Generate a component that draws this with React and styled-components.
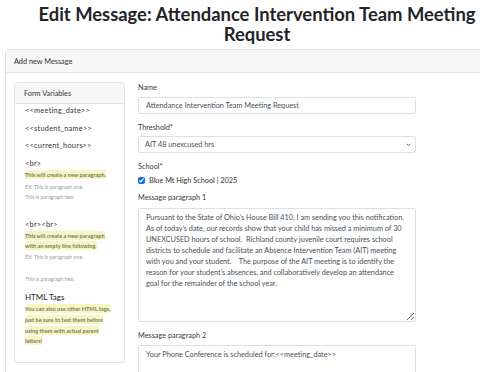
import React from "react";
import styled, { createGlobalStyle } from "styled-components";

const GlobalStyle = createGlobalStyle`
  html, body { margin: 0; padding: 0; overflow: hidden; background: #fff; }
  body { font-family: Lato, "Open Sans", sans-serif; color: #212529; }
  * { box-sizing: border-box; }
`;

const Page = styled.div`
  width: 504px;
  margin-left: 5px;
`;

const Title = styled.h1`
  margin: 5px 0 5px;
  text-align: center;
  font-size: 18.4px;
  line-height: 19.5px;
  font-weight: 700;
  color: #212529;
`;

const Card = styled.div`
  border: 1px solid #dfdfdf;
  border-radius: 3px;
  background: #fff;
`;

const CardHeader = styled.div`
  background: #f7f7f7;
  border-bottom: 1px solid #e3e3e3;
  height: ${(p) => p.$h || 23}px;
  display: flex;
  align-items: center;
  padding-left: ${(p) => p.$pad || 8}px;
  font-size: 7.3px;
  color: #333;
`;

const CardBody = styled.div`
  display: flex;
  align-items: flex-start;
  gap: 13px;
  padding: 9px 8px 10px;
`;

const Sidebar = styled.div`
  width: 111px;
  flex: none;
  border: 1px solid #e3e3e3;
  border-radius: 3px;
`;

const SideBody = styled.div`
  display: flex;
  flex-direction: column;
  align-items: flex-start;
  padding: 1px 8px 15px 10px;
`;

const Var = styled.div`
  font-size: 7.3px;
  line-height: 11px;
  color: #333;
  margin-top: ${(p) => p.$mt || 0}px;
  letter-spacing: 0.3px;
`;

const Heading = styled.div`
  font-size: 8px;
  line-height: 12px;
  font-weight: 400;
  color: #222;
  margin-top: ${(p) => p.$mt || 0}px;
`;

const Note = styled.div`
  font-size: 5.6px;
  line-height: 10.7px;
  font-weight: 700;
  color: #7d7d62;
  margin-top: ${(p) => p.$mt || 0}px;
  mark {
    background: #f8f5c4;
    color: inherit;
    padding: 1px 0;
  }
`;

const Example = styled.div`
  font-size: 5.2px;
  line-height: 9.5px;
  color: #9a9a9a;
  margin-top: ${(p) => p.$mt || 0}px;
`;

const FormCol = styled.div`
  width: 278px;
  flex: none;
  display: flex;
  flex-direction: column;
`;

const Group = styled.div`
  display: flex;
  flex-direction: column;
  margin-bottom: ${(p) => p.$mb ?? 8}px;
`;

const Label = styled.label`
  font-size: 7.3px;
  line-height: 11px;
  color: #3a3a3a;
  margin-bottom: ${(p) => p.$mb ?? 3.5}px;
`;

const fieldBase = `
  display: block;
  width: 278px;
  margin: 0;
  border: 1px solid #dcdfe3;
  border-radius: 2px;
  background: #fff;
  font-family: Lato, "Open Sans", sans-serif;
  font-size: 7.3px;
  color: #495057;
  outline: none;
`;

const Input = styled.input`
  ${fieldBase}
  height: 17px;
  padding: 0 7px;
`;

const SelectWrap = styled.div`
  position: relative;
  width: 278px;
  height: 17px;
`;

const Select = styled.select`
  ${fieldBase}
  height: 17px;
  padding: 0 6px;
  appearance: none;
`;

const Chevron = styled.svg`
  position: absolute;
  right: 5px;
  top: 6px;
  width: 5px;
  height: 5px;
  pointer-events: none;
`;

const CheckRow = styled.label`
  display: flex;
  align-items: center;
  gap: 4px;
  font-size: 7.3px;
  line-height: 11px;
  color: #333;
  margin-top: 2.5px;
`;

const Check = styled.input`
  width: 7px;
  height: 7px;
  margin: 0;
  accent-color: #0b6ee6;
`;

const TextArea = styled.textarea`
  ${fieldBase}
  height: ${(p) => p.$h}px;
  padding: 3px 7px;
  line-height: 11px;
  resize: vertical;
`;

const p1 =
  "Pursuant to the State of Ohio\u2019s House Bill 410, I am sending you this notification. As of today\u2019s date, our records show that your child has missed a minimum of 30 UNEXCUSED hours of school.  Richland county juvenile court requires school districts to schedule and facilitate an Absence Intervention Team (AIT) meeting with you and your student.    The purpose of the AIT meeting is to identify the reason for your student\u2019s absences, and collaboratively develop an attendance goal for the remainder of the school year.";

const p2 =
  "Your Phone Conference is scheduled for:<<meeting_date>>\n\nAll of the staff at the school look forward to speaking with you and your student.";

export default function App() {
  return (
    <>
      <GlobalStyle />
      <Page>
        <Title>
          Edit Message: Attendance Intervention Team Meeting Request
        </Title>
        <Card>
          <CardHeader $h={23}>Add new Message</CardHeader>
          <CardBody>
            <Sidebar>
              <CardHeader $h={21} $pad={9}>Form Variables</CardHeader>
              <SideBody>
                <Var>{"<<meeting_date>>"}</Var>
                <Var $mt={6.6}>{"<<student_name>>"}</Var>
                <Var $mt={6.6}>{"<<current_hours>>"}</Var>
                <Var $mt={7}>{"<br>"}</Var>
                <Note $mt={1}>
                  <mark>This will create a new paragraph.</mark>
                </Note>
                <Example $mt={2.2}>EX: This is paragraph one.</Example>
                <Example>This is paragraph two.</Example>
                <Var $mt={17}>{"<br><br>"}</Var>
                <Note $mt={0.5}>
                  <mark>This will create a new paragraph</mark>
                  <br />
                  <mark>with an empty line following.</mark>
                </Note>
                <Example $mt={1}>EX: This is paragraph one.</Example>
                <Example $mt={12.5}>This is paragraph two.</Example>
                <Heading $mt={7}>HTML Tags</Heading>
                <Note $mt={0.7}>
                  <mark>You can also use other HTML tags,</mark>
                  <br />
                  <mark>just be sure to test them before</mark>
                  <br />
                  <mark>using them with actual parent</mark>
                  <br />
                  <mark>letters!</mark>
                </Note>
              </SideBody>
            </Sidebar>
            <FormCol>
              <Group>
                <Label>Name</Label>
                <Input defaultValue="Attendance Intervention Team Meeting Request" />
              </Group>
              <Group>
                <Label>Threshold*</Label>
                <SelectWrap>
                  <Select defaultValue="ait48">
                    <option value="ait48">AIT 48 unexcused hrs</option>
                  </Select>
                  <Chevron viewBox="0 0 10 10">
                    <path d="M1.5 3.5 L5 7 L8.5 3.5" fill="none" stroke="#555" strokeWidth="1.8" />
                  </Chevron>
                </SelectWrap>
              </Group>
              <Group $mb={6.7}>
                <Label $mb={0}>School*</Label>
                <CheckRow>
                  <Check type="checkbox" defaultChecked />
                  Blue Mt High School | 2025
                </CheckRow>
              </Group>
              <Group $mb={8.5}>
                <Label $mb={4.5}>Message paragraph 1</Label>
                <TextArea $h={114} defaultValue={p1} />
              </Group>
              <Group>
                <Label>Message paragraph 2</Label>
                <TextArea $h={90} defaultValue={p2} />
              </Group>
            </FormCol>
          </CardBody>
        </Card>
      </Page>
    </>
  );
}
